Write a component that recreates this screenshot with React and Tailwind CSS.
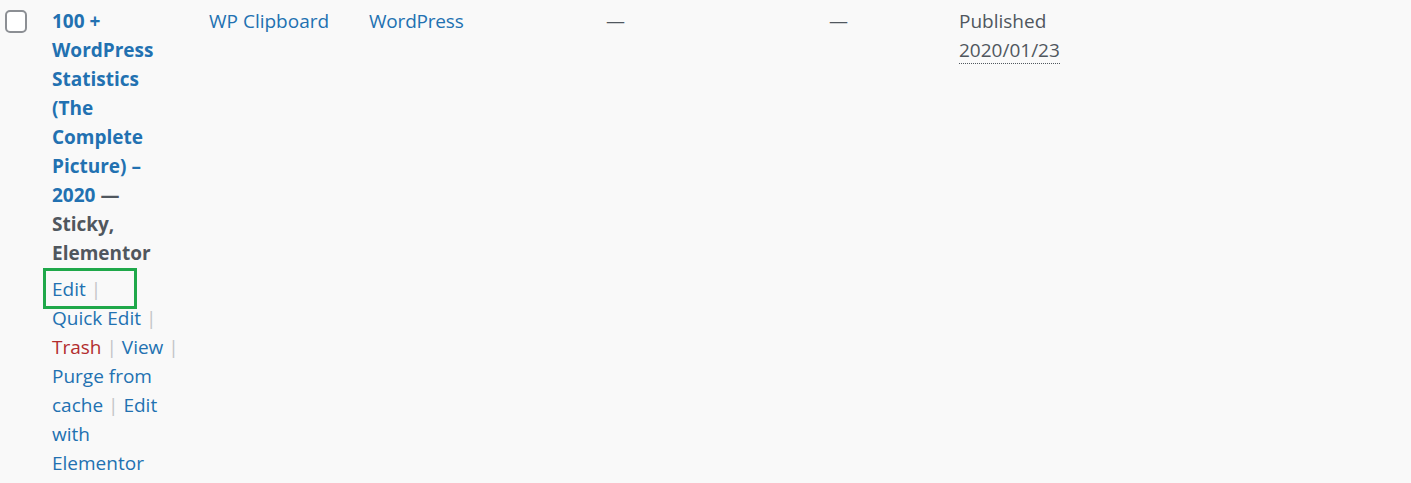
function Sep() {
  return <span className="text-[#c3c4c7]">{"\u00a0| "}</span>;
}

function RowActions() {
  return (
    <div className="mt-[7px] whitespace-nowrap text-[#2271b1]">
      <a href="#">Edit</a>
      <Sep />
      <br />
      <button type="button" className="text-[#2271b1]">Quick Edit</button>
      <Sep />
      <br />
      <a href="#" className="text-[#b32d2e]">Trash</a>
      <Sep />
      <a href="#">View</a>
      <Sep />
      <br />
      <a href="#">
        Purge from
        <br />
        cache
      </a>
      <Sep />
      <a href="#">
        Edit
        <br />
        with
        <br />
        Elementor
      </a>
    </div>
  );
}

export default function App() {
  return (
    <div
      className="w-[1411px] h-[483px] bg-[#f9f9f9] text-[19px] leading-[29px] text-[#50575e] overflow-hidden"
      style={{ fontFamily: '"Open Sans", "Noto Sans", sans-serif' }}
    >
      <div className="relative flex items-start pt-[7px]">
        {/* checkbox column */}
        <div className="w-[52px] shrink-0 pl-[5px] pt-[3px]">
          <div className="w-[22px] h-[23px] rounded-[5px] border-2 border-[#8c8f94] bg-white" />
        </div>

        {/* title column */}
        <div className="w-[157px] shrink-0">
          <div className="w-[112px]">
            <strong className="font-bold">
              <a href="#" className="text-[#2271b1]">
                100 + WordPress Statistics (The Complete Picture) – 2020
              </a>
              <span className="text-[#50575e]"> — Sticky, Elementor</span>
            </strong>
            <RowActions />
          </div>
          {/* highlight box */}
          <div className="absolute left-[43px] top-[268px] w-[94px] h-[41px] border-[3px] border-[#1fa84a]" />
        </div>

        {/* author */}
        <div className="w-[160px] shrink-0">
          <a href="#" className="text-[#2271b1]">WP Clipboard</a>
        </div>

        {/* categories */}
        <div className="w-[237px] shrink-0">
          <a href="#" className="text-[#2271b1] tracking-[-0.2px]">WordPress</a>
        </div>

        {/* tags */}
        <div className="w-[223px] shrink-0">
          <span>—</span>
        </div>

        {/* comments */}
        <div className="w-[130px] shrink-0">
          <span>—</span>
        </div>

        {/* date */}
        <div className="flex-1">
          <div>Published</div>
          <abbr title="2020/01/23 10:00:00 am" className="no-underline border-b border-dotted border-[#50575e]">
            2020/01/23
          </abbr>
        </div>
      </div>
    </div>
  );
}
